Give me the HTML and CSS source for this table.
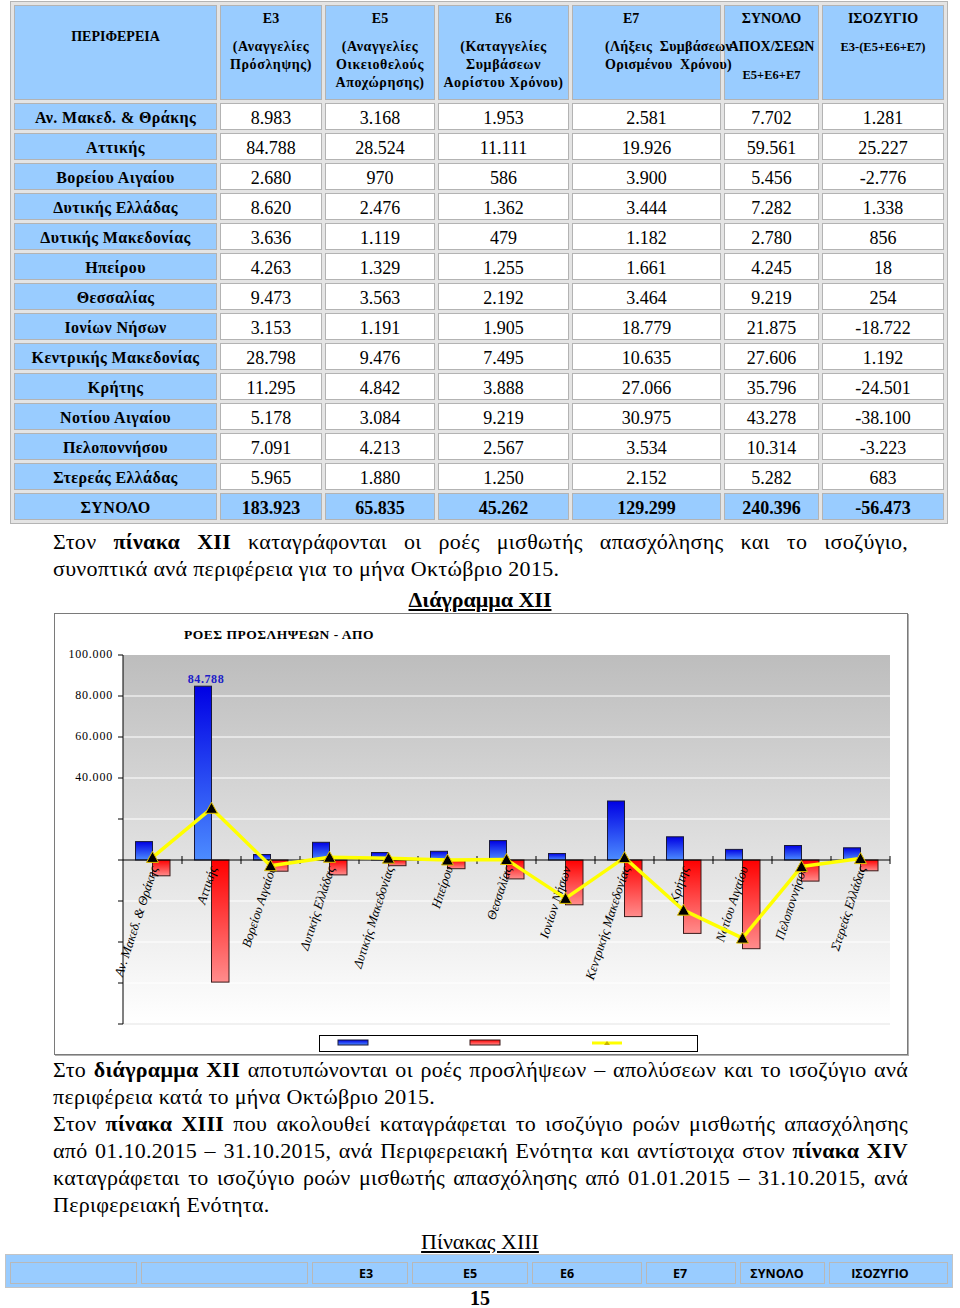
FILE: index.html
```html
<!DOCTYPE html>
<html lang="el">
<head>
<meta charset="utf-8">
<title>Ροές μισθωτής απασχόλησης</title>
<link rel="stylesheet" href="styles.css">
</head>
<body>
<table class="t1">
  <tr class="hd">
    <td class="c1"><div class="per">ΠΕΡΙΦΕΡΕΙΑ</div></td>
    <td class="c2"><div class="code">E3</div><div class="desc">(Αναγγελίες<br>Πρόσληψης)</div></td>
    <td class="c3"><div class="code">E5</div><div class="desc">(Αναγγελίες<br>Οικειοθελούς<br>Αποχώρησης)</div></td>
    <td class="c4"><div class="code">E6</div><div class="desc">(Καταγγελίες<br>Συμβάσεων<br>Αορίστου Χρόνου)</div></td>
    <td class="c5 lft"><div class="code e7">E7</div><div class="desc e7t">(Λήξεις&nbsp; Συμβάσεων<br>Ορισμένου&nbsp; Χρόνου)</div></td>
    <td class="c6"><div class="code">ΣΥΝΟΛΟ</div><div>ΑΠΟΧ/ΣΕΩΝ</div><div class="sm sm1">E5+E6+E7</div></td>
    <td class="c7"><div class="code">ΙΣΟΖΥΓΙΟ</div><div class="sm">E3-(E5+E6+E7)</div></td>
  </tr>
  <tr><td class="reg">Αν. Μακεδ. &amp; Θράκης</td><td>8.983</td><td>3.168</td><td>1.953</td><td>2.581</td><td>7.702</td><td>1.281</td></tr>
  <tr><td class="reg">Αττικής</td><td>84.788</td><td>28.524</td><td>11.111</td><td>19.926</td><td>59.561</td><td>25.227</td></tr>
  <tr><td class="reg">Βορείου Αιγαίου</td><td>2.680</td><td>970</td><td>586</td><td>3.900</td><td>5.456</td><td>-2.776</td></tr>
  <tr><td class="reg">Δυτικής Ελλάδας</td><td>8.620</td><td>2.476</td><td>1.362</td><td>3.444</td><td>7.282</td><td>1.338</td></tr>
  <tr><td class="reg">Δυτικής Μακεδονίας</td><td>3.636</td><td>1.119</td><td>479</td><td>1.182</td><td>2.780</td><td>856</td></tr>
  <tr><td class="reg">Ηπείρου</td><td>4.263</td><td>1.329</td><td>1.255</td><td>1.661</td><td>4.245</td><td>18</td></tr>
  <tr><td class="reg">Θεσσαλίας</td><td>9.473</td><td>3.563</td><td>2.192</td><td>3.464</td><td>9.219</td><td>254</td></tr>
  <tr><td class="reg">Ιονίων Νήσων</td><td>3.153</td><td>1.191</td><td>1.905</td><td>18.779</td><td>21.875</td><td>-18.722</td></tr>
  <tr><td class="reg">Κεντρικής Μακεδονίας</td><td>28.798</td><td>9.476</td><td>7.495</td><td>10.635</td><td>27.606</td><td>1.192</td></tr>
  <tr><td class="reg">Κρήτης</td><td>11.295</td><td>4.842</td><td>3.888</td><td>27.066</td><td>35.796</td><td>-24.501</td></tr>
  <tr><td class="reg">Νοτίου Αιγαίου</td><td>5.178</td><td>3.084</td><td>9.219</td><td>30.975</td><td>43.278</td><td>-38.100</td></tr>
  <tr><td class="reg">Πελοποννήσου</td><td>7.091</td><td>4.213</td><td>2.567</td><td>3.534</td><td>10.314</td><td>-3.223</td></tr>
  <tr><td class="reg">Στερεάς Ελλάδας</td><td>5.965</td><td>1.880</td><td>1.250</td><td>2.152</td><td>5.282</td><td>683</td></tr>
  <tr class="tot"><td class="reg">ΣΥΝΟΛΟ</td><td>183.923</td><td>65.835</td><td>45.262</td><td>129.299</td><td>240.396</td><td>-56.473</td></tr>
</table>

<p class="txt p1"><span class="ln">Στον <b>πίνακα XII</b> καταγράφονται οι ροές μισθωτής απασχόλησης και το ισοζύγιο,</span>συνοπτικά ανά περιφέρεια για το μήνα Οκτώβριο 2015.</p>

<h2 class="cap cap1">Διάγραμμα XII</h2>

<div class="chart">
<svg class="plot" viewBox="55 614 852 440" width="852" height="440" xmlns="http://www.w3.org/2000/svg">
  <defs>
    <linearGradient id="bg" x1="0" y1="0" x2="0" y2="1"><stop offset="0" stop-color="#bdbdbd"/><stop offset="1" stop-color="#ffffff"/></linearGradient>
    <linearGradient id="gb" x1="0" y1="0" x2="0" y2="1"><stop offset="0" stop-color="#0000e4"/><stop offset="1" stop-color="#4c8cff"/></linearGradient>
    <linearGradient id="gr" x1="0" y1="0" x2="0" y2="1"><stop offset="0" stop-color="#ff0000"/><stop offset="1" stop-color="#ff8c8c"/></linearGradient>
    <path id="tri" d="M-6 5 L0 -6 L6 5 Z" fill="#000" stroke="#e0c000" stroke-width="1"/>
  </defs>

  <text class="ttl" x="184" y="639">ΡΟΕΣ ΠΡΟΣΛΗΨΕΩΝ - ΑΠΟ</text>

  <rect x="123" y="655" width="767" height="369" fill="url(#bg)"/>
  <g stroke="#ffffff" stroke-width="1.2">
    <line x1="123" y1="696" x2="890" y2="696"/>
    <line x1="123" y1="737" x2="890" y2="737"/>
    <line x1="123" y1="778" x2="890" y2="778"/>
    <line x1="123" y1="819" x2="890" y2="819"/>
    <line x1="123" y1="901" x2="890" y2="901"/>
    <line x1="123" y1="942" x2="890" y2="942"/>
    <line x1="123" y1="983" x2="890" y2="983"/>
    <line x1="123" y1="1024" x2="890" y2="1024" stroke="#e4e4e4"/>
  </g>

  <g stroke="#000" stroke-width="1">
    <line x1="123" y1="655" x2="123" y2="1024"/>
    <line x1="118" y1="655" x2="123" y2="655"/>
    <line x1="118" y1="696" x2="123" y2="696"/>
    <line x1="118" y1="737" x2="123" y2="737"/>
    <line x1="118" y1="778" x2="123" y2="778"/>
    <line x1="118" y1="819" x2="123" y2="819"/>
    <line x1="118" y1="860" x2="123" y2="860"/>
    <line x1="118" y1="901" x2="123" y2="901"/>
    <line x1="118" y1="942" x2="123" y2="942"/>
    <line x1="118" y1="983" x2="123" y2="983"/>
    <line x1="118" y1="1024" x2="123" y2="1024"/>
  </g>
  <g class="yl" text-anchor="end">
    <text x="113" y="658">100.000</text>
    <text x="113" y="699">80.000</text>
    <text x="113" y="740">60.000</text>
    <text x="113" y="781">40.000</text>
  </g>

  <g fill="url(#gb)" stroke="#1a1a3a" stroke-width="1">
    <rect x="135.5" y="841.6" width="17" height="18.4"/>
    <rect x="194.5" y="686.2" width="17" height="173.8"/>
    <rect x="253.5" y="854.5" width="17" height="5.5"/>
    <rect x="312.5" y="842.3" width="17" height="17.7"/>
    <rect x="371.5" y="852.5" width="17" height="7.5"/>
    <rect x="430.5" y="851.3" width="17" height="8.7"/>
    <rect x="489.5" y="840.6" width="17" height="19.4"/>
    <rect x="548.5" y="853.5" width="17" height="6.5"/>
    <rect x="607.5" y="801.0" width="17" height="59"/>
    <rect x="666.5" y="836.8" width="17" height="23.2"/>
    <rect x="725.5" y="849.4" width="17" height="10.6"/>
    <rect x="784.5" y="845.5" width="17" height="14.5"/>
    <rect x="843.5" y="847.8" width="17" height="12.2"/>
  </g>
  <g fill="url(#gr)" stroke="#3a1a1a" stroke-width="1">
    <rect x="152.5" y="860" width="17.5" height="15.8"/>
    <rect x="211.5" y="860" width="17.5" height="122.1"/>
    <rect x="270.5" y="860" width="17.5" height="11.2"/>
    <rect x="329.5" y="860" width="17.5" height="14.9"/>
    <rect x="388.5" y="860" width="17.5" height="5.7"/>
    <rect x="447.5" y="860" width="17.5" height="8.7"/>
    <rect x="506.5" y="860" width="17.5" height="18.9"/>
    <rect x="565.5" y="860" width="17.5" height="44.8"/>
    <rect x="624.5" y="860" width="17.5" height="56.6"/>
    <rect x="683.5" y="860" width="17.5" height="73.4"/>
    <rect x="742.5" y="860" width="17.5" height="88.7"/>
    <rect x="801.5" y="860" width="17.5" height="21.1"/>
    <rect x="860.5" y="860" width="17.5" height="10.8"/>
  </g>

  <g stroke="#000" stroke-width="1">
    <line x1="123" y1="860" x2="890" y2="860"/>
    <line x1="182" y1="856" x2="182" y2="864"/>
    <line x1="241" y1="856" x2="241" y2="864"/>
    <line x1="300" y1="856" x2="300" y2="864"/>
    <line x1="359" y1="856" x2="359" y2="864"/>
    <line x1="418" y1="856" x2="418" y2="864"/>
    <line x1="477" y1="856" x2="477" y2="864"/>
    <line x1="536" y1="856" x2="536" y2="864"/>
    <line x1="595" y1="856" x2="595" y2="864"/>
    <line x1="654" y1="856" x2="654" y2="864"/>
    <line x1="713" y1="856" x2="713" y2="864"/>
    <line x1="772" y1="856" x2="772" y2="864"/>
    <line x1="831" y1="856" x2="831" y2="864"/>
    <line x1="890" y1="856" x2="890" y2="864"/>
  </g>

  <g class="cat" text-anchor="end">
    <text transform="translate(158 868) rotate(-72)">Αν. Μακεδ. &amp; Θράκης</text>
    <text transform="translate(217 868) rotate(-72)">Αττικής</text>
    <text transform="translate(276 868) rotate(-72)">Βορείου Αιγαίου</text>
    <text transform="translate(335 868) rotate(-72)">Δυτικής Ελλάδας</text>
    <text transform="translate(394 868) rotate(-72)">Δυτικής Μακεδονίας</text>
    <text transform="translate(453 868) rotate(-72)">Ηπείρου</text>
    <text transform="translate(512 868) rotate(-72)">Θεσσαλίας</text>
    <text transform="translate(571 868) rotate(-72)">Ιονίων Νήσων</text>
    <text transform="translate(630 868) rotate(-72)">Κεντρικής Μακεδονίας</text>
    <text transform="translate(689 868) rotate(-72)">Κρήτης</text>
    <text transform="translate(748 868) rotate(-72)">Νοτίου Αιγαίου</text>
    <text transform="translate(807 868) rotate(-72)">Πελοποννήσου</text>
    <text transform="translate(866 868) rotate(-72)">Στερεάς Ελλάδας</text>
  </g>

  <polyline fill="none" stroke="#ffff00" stroke-width="3.5" stroke-linejoin="round"
    points="152.5,857.4 211.5,808.3 270.5,865.7 329.5,857.3 388.5,858.2 447.5,860 506.5,859.5 565.5,898.4 624.5,857.6 683.5,910.2 742.5,938.1 801.5,866.6 860.5,858.6"/>
  <use href="#tri" x="152.5" y="857.4"/>
  <use href="#tri" x="211.5" y="808.3"/>
  <use href="#tri" x="270.5" y="865.7"/>
  <use href="#tri" x="329.5" y="857.3"/>
  <use href="#tri" x="388.5" y="858.2"/>
  <use href="#tri" x="447.5" y="860"/>
  <use href="#tri" x="506.5" y="859.5"/>
  <use href="#tri" x="565.5" y="898.4"/>
  <use href="#tri" x="624.5" y="857.6"/>
  <use href="#tri" x="683.5" y="910.2"/>
  <use href="#tri" x="742.5" y="938.1"/>
  <use href="#tri" x="801.5" y="866.6"/>
  <use href="#tri" x="860.5" y="858.6"/>

  <text class="val" x="206" y="683" text-anchor="middle">84.788</text>

  <rect x="319.5" y="1035.5" width="378" height="16" fill="#fff" stroke="#000" stroke-width="1"/>
  <rect x="338" y="1040" width="30" height="5" fill="url(#gb)" stroke="#1a1a3a" stroke-width="1"/>
  <rect x="470" y="1040" width="30" height="5" fill="url(#gr)" stroke="#3a1a1a" stroke-width="1"/>
  <line x1="592" y1="1043" x2="622" y2="1043" stroke="#ffff00" stroke-width="3"/>
  <path d="M604 1045 L607 1041 L610 1045 Z" fill="#c8b400"/>
</svg>
</div>

<p class="txt p2"><span class="ln">Στο <b>διάγραμμα XII</b> αποτυπώνονται οι ροές προσλήψεων – απολύσεων και το ισοζύγιο ανά</span>περιφέρεια κατά το μήνα Οκτώβριο 2015.</p>
<p class="txt p3"><span class="ln">Στον <b>πίνακα XIII</b> που ακολουθεί καταγράφεται το ισοζύγιο ροών μισθωτής απασχόλησης</span><span class="ln">από 01.10.2015 – 31.10.2015, ανά Περιφερειακή Ενότητα και αντίστοιχα στον <b>πίνακα XIV</b></span><span class="ln">καταγράφεται το ισοζύγιο ροών μισθωτής απασχόλησης από 01.01.2015 – 31.10.2015, ανά</span>Περιφερειακή Ενότητα.</p>

<h2 class="cap cap2">Πίνακας XIII</h2>

<table class="t2">
  <tr>
    <td class="d1"></td>
    <td class="d2"></td>
    <td class="d3">E3</td>
    <td class="d4">E5</td>
    <td class="d5">E6</td>
    <td class="d6">E7</td>
    <td class="d7">ΣΥΝΟΛΟ</td>
    <td class="d8">ΙΣΟΖΥΓΙΟ</td>
  </tr>
</table>

<div class="pnum">15</div>
</body>
</html>
```

FILE: styles.css
```css
* { box-sizing: border-box; }

body {
  margin: 0;
  width: 960px;
  background: #ffffff;
  color: #000000;
  font-family: "Liberation Serif", "Times New Roman", serif;
}

/* ---------- Table XII ---------- */
.t1 {
  margin: 1px 0 0 10px;
  width: 938px;
  table-layout: fixed;
  border-collapse: separate;
  border-spacing: 3px;
  border: 1px solid #b4b4b4;
  background: #e4e4e4;
}
.t1 td {
  border: 1px solid #b3b3b3;
  padding: 4px 0 0;
  text-align: center;
  height: 27px;
  font-size: 18px;
  background: #ffffff;
  white-space: nowrap;
}
.t1 .c1 { width: 203px; }
.t1 .c2 { width: 102px; }
.t1 .c3 { width: 110px; }
.t1 .c4 { width: 131px; }
.t1 .c5 { width: 149px; }
.t1 .c6 { width: 95px; }
.t1 .c7 { width: 122px; }

.t1 .hd td {
  height: 95px;
  vertical-align: top;
  background: #99ccff;
  font-size: 14px;
  font-weight: bold;
  line-height: 18px;
  padding-top: 4px;
}
.t1 .hd .code { margin-bottom: 10px; }
.t1 .hd .desc { letter-spacing: 0.6px; }
.t1 .hd .per { padding-top: 18px; }
.t1 .hd .lft { text-align: left; }
.t1 .hd .e7 { padding-left: 50px; }
.t1 .hd .e7t { padding-left: 32px; letter-spacing: 0.3px; }
.t1 .hd .sm { font-size: 12.5px; }
.t1 .hd .sm1 { margin-top: 10px; }

.t1 .reg {
  background: #99ccff;
  font-size: 16px;
  font-weight: bold;
  letter-spacing: 0.4px;
  vertical-align: top;
  padding-top: 5px;
}
.t1 .tot td {
  background: #99ccff;
  font-weight: bold;
}

/* ---------- Body text ---------- */
.txt {
  margin: 0 52px 0 53px;
  font-size: 22px;
  letter-spacing: 0.3px;
  line-height: 27px;
  text-align: left;
}
.txt b { font-weight: bold; }
.txt .ln {
  display: block;
  text-align: justify;
  text-align-last: justify;
}
.p1 { margin-top: 4px; }
.p2 { margin-top: 1px; }

.cap {
  margin: 0;
  text-align: center;
  font-size: 22px;
  text-decoration: underline;
}
.cap1 { margin-top: 4px; line-height: 27px; font-weight: bold; }
.cap2 { margin-top: 12px; line-height: 24px; font-weight: normal; }

/* ---------- Chart ---------- */
.chart {
  margin-left: 54px;
  width: 854px;
  height: 442px;
  border: 1px solid #7a7a7a;
  box-shadow: 1px 1px 0 #b0b0b0;
  background: #ffffff;
}
.plot { display: block; }
.ttl { font: bold 13.5px "Liberation Serif", serif; letter-spacing: 0.5px; fill: #000; }
.yl { font: 12px "Liberation Serif", serif; letter-spacing: 0.8px; fill: #000; }
.val { font: bold 12px "Liberation Serif", serif; letter-spacing: 0.6px; fill: #1c1cc8; }
.cat { font: italic 13px "Liberation Serif", serif; fill: #000; }

/* ---------- Table XIII ---------- */
.t2 {
  margin: 0 0 0 5px;
  width: 948px;
  table-layout: fixed;
  border-collapse: separate;
  border-spacing: 4px 3px;
  padding-top: 4px;
  border: 1px solid #c4c4c4;
  background: #99ccff;
}
.t2 td {
  height: 22px;
  padding: 0;
  border: 1px solid #b8b8b8;
  background: #99ccff;
  font-family: "Open Sans", "Liberation Sans", sans-serif;
  font-weight: bold;
  font-size: 12.5px;
  text-align: center;
}
.t2 .d1 { width: 127px; }
.t2 .d2 { width: 167px; }
.t2 .d3 { width: 96px; padding-left: 12px; }
.t2 .d4 { width: 116px; }
.t2 .d5 { width: 110px; padding-right: 40px; }
.t2 .d6 { width: 90px; padding-right: 22px; }
.t2 .d7 { width: 85px; padding-right: 11px; }
.t2 .d8 { width: 119px; padding-right: 17px; }

.pnum {
  text-align: center;
  font-size: 20px;
  font-weight: bold;
  line-height: 20px;
}
```
